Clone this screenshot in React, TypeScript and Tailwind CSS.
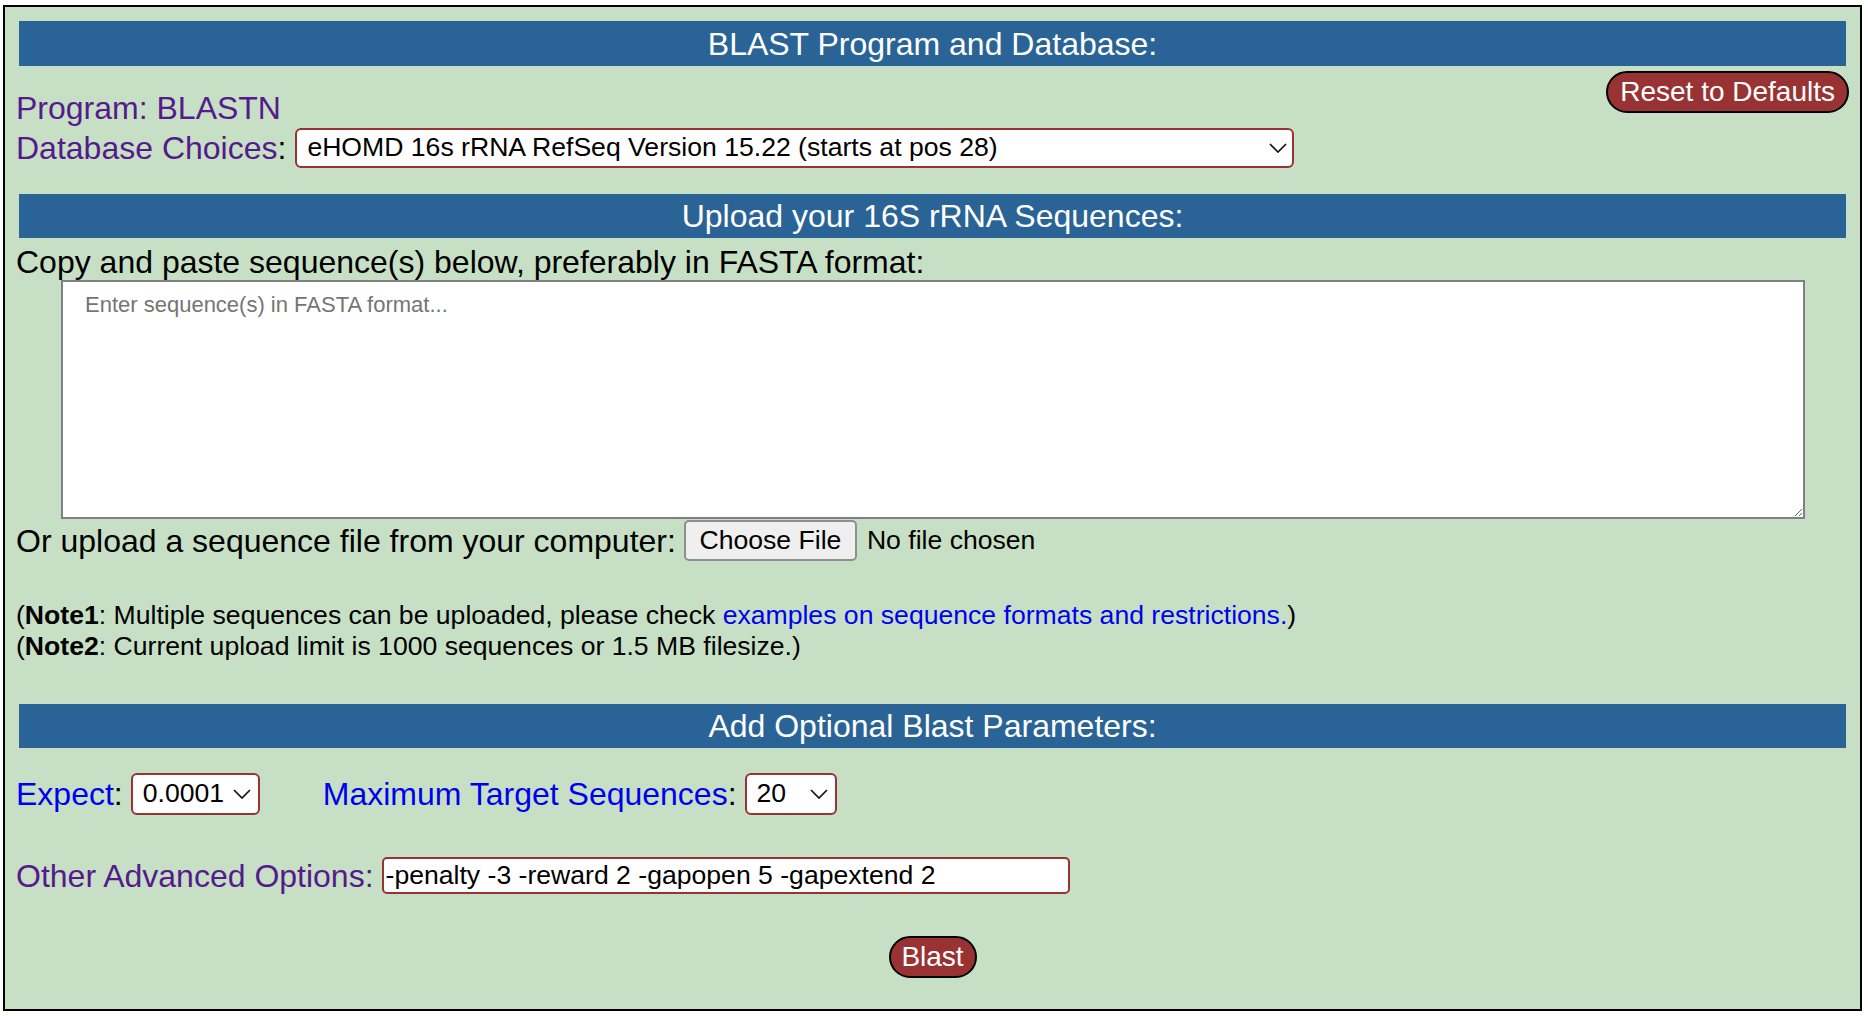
import React from "react";

const Chevron = () => (
  <svg width="18" height="10" viewBox="0 0 18 10" className="pointer-events-none">
    <polyline points="1,1 9,9 17,1" fill="none" stroke="#111" strokeWidth="1.7" />
  </svg>
);

const Header = ({ children, cls }: { children: React.ReactNode; cls: string }) => (
  <div className={`mx-[3px] bg-[#2a6496] text-white text-[32px] flex items-center justify-center ${cls}`}>
    {children}
  </div>
);

export default function App() {
  return (
    <div className="w-[1868px] h-[1016px] bg-white font-['Liberation_Sans',Arial,sans-serif] text-black overflow-hidden">
      <div className="ml-[3px] mt-[5px] w-[1859px] h-[1006px] border-2 border-black bg-[#c7e0c5] px-[11px] pt-[14px]">
        <Header cls="h-[45px]">BLAST Program and Database:</Header>

        <div className="flex justify-between">
          <div className="pt-[22px]">
            <div className="h-[40px] flex items-center text-[32px] text-[#551a8b]">Program: BLASTN</div>
            <div className="h-[40px] flex items-center text-[32px]">
              <span className="text-[#551a8b]">Database Choices</span>
              <span>:</span>
              <div className="ml-[9px] w-[999px] h-[40px] border-2 border-[#993333] rounded-[6px] bg-white flex items-center justify-between pl-[10px] pr-[5px] text-[26.6px]">
                <span>eHOMD 16s rRNA RefSeq Version 15.22 (starts at pos 28)</span>
                <Chevron />
              </div>
            </div>
          </div>
          <button className="mt-[5px] h-[42px] px-[12px] rounded-full border-2 border-black bg-[#993333] text-white text-[28px] leading-none">
            Reset to Defaults
          </button>
        </div>

        <Header cls="mt-[26px] h-[44px]">Upload your 16S rRNA Sequences:</Header>

        <div className="mt-[6px] h-[36px] flex items-center text-[32px]">
          Copy and paste sequence(s) below, preferably in FASTA format:
        </div>
        <textarea
          className="block ml-[45px] w-[1744px] h-[239px] border-2 border-[#808080] bg-white pt-[6px] px-[22px] text-[22px] placeholder:text-[#757575] outline-none"
          placeholder="Enter sequence(s) in FASTA format..."
        />

        <div className="mt-[1px] h-[41px] flex items-center text-[32px]">
          <span>Or upload a sequence file from your computer:</span>
          <div className="ml-[8px] w-[173px] h-[41px] border-2 border-[#8f8f8f] rounded-[5px] bg-[#efefef] flex items-center justify-center text-[26.6px]">
            Choose File
          </div>
          <span className="ml-[10px] text-[26.6px]">No file chosen</span>
        </div>

        <div className="mt-[39px] text-[26.6px]">
          <div className="h-[31px] leading-[31px]">
            (<b>Note1</b>: Multiple sequences can be uploaded, please check{" "}
            <span className="text-[#0000ee]">examples on sequence formats and restrictions.</span>)
          </div>
          <div className="h-[31px] leading-[31px]">
            (<b>Note2</b>: Current upload limit is 1000 sequences or 1.5 MB filesize.)
          </div>
        </div>

        <Header cls="mt-[42px] h-[44px]">Add Optional Blast Parameters:</Header>

        <div className="mt-[25px] h-[42px] flex items-center text-[32px]">
          <span className="text-[#0000ee]">Expect</span>
          <span>:</span>
          <div className="ml-[8px] w-[129px] h-[42px] border-2 border-[#993333] rounded-[6px] bg-white flex items-center justify-between pl-[10px] pr-[7px] text-[26.6px]">
            <span>0.0001</span>
            <Chevron />
          </div>
          <span className="ml-[63px] text-[#0000ee]">Maximum Target Sequences</span>
          <span>:</span>
          <div className="ml-[8px] w-[92px] h-[42px] border-2 border-[#993333] rounded-[6px] bg-white flex items-center justify-between pl-[10px] pr-[7px] text-[26.6px]">
            <span>20</span>
            <Chevron />
          </div>
        </div>

        <div className="mt-[42px] h-[37px] flex items-center text-[32px]">
          <span className="text-[#551a8b]">Other Advanced Options:</span>
          <div className="ml-[8px] w-[688px] h-[37px] border-2 border-[#993333] rounded-[5px] bg-white flex items-center px-[2px] text-[26.6px]">
            -penalty -3 -reward 2 -gapopen 5 -gapextend 2
          </div>
        </div>

        <div className="mt-[42px] flex justify-center">
          <button className="h-[42px] w-[88px] rounded-full border-2 border-black bg-[#993333] text-white text-[28px] leading-none">
            Blast
          </button>
        </div>
      </div>
    </div>
  );
}
